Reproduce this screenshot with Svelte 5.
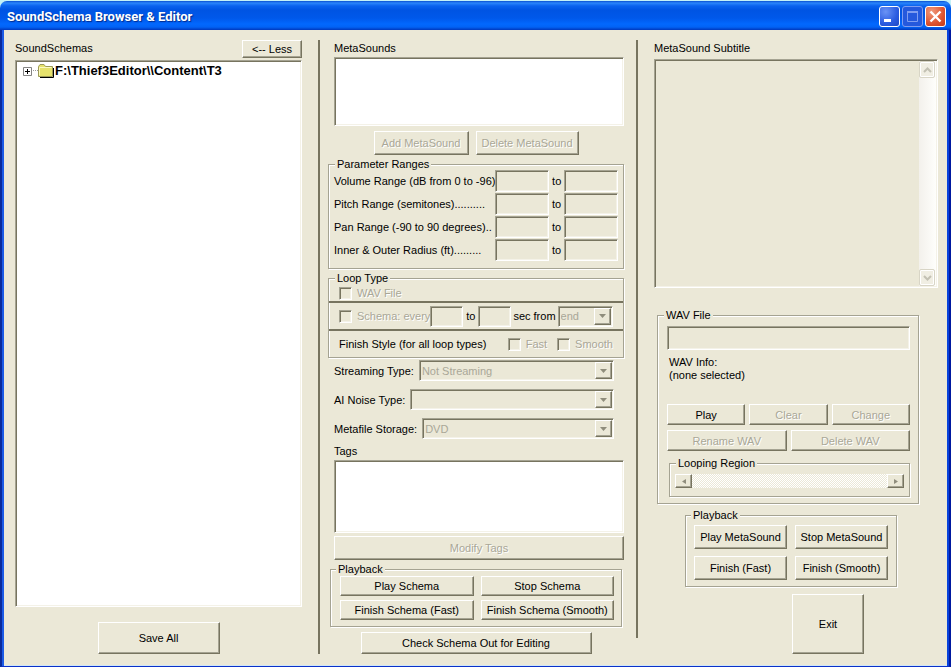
<script>
  const ranges = [
    { id: 'vol', label: 'Volume Range (dB from 0 to -96)' },
    { id: 'pitch', label: 'Pitch Range (semitones)..........' },
    { id: 'pan', label: 'Pan Range (-90 to 90 degrees)..' },
    { id: 'radius', label: 'Inner & Outer Radius (ft).........' }
  ];
  const choices = [
    { id: 'streaming', label: 'Streaming Type:', value: 'Not Streaming' },
    { id: 'noise', label: 'AI Noise Type:', value: '' },
    { id: 'storage', label: 'Metafile Storage:', value: 'DVD' }
  ];
</script>

{#snippet drop(id, value, label)}
  <span class="drop">
    <select {id} disabled aria-label={label}><option>{value}</option></select>
    <span class="arrow"><svg width="7" height="4" viewBox="0 0 7 4"><path d="M0 0h7L3.5 4z" fill="#8f8d7c" /></svg></span>
  </span>
{/snippet}

<main class="window">
  <header>
    <h1>SoundSchema Browser &amp; Editor</h1>
    <div class="caption">
      <button aria-label="Minimize"><svg viewBox="0 0 19 19"><path d="M4 12h7v3H4z" fill="#fff" /></svg></button>
      <button class="max" aria-label="Maximize" disabled><svg viewBox="0 0 19 19"><path d="M4.500 5.500h10v9h-10z" fill="none" stroke="#7f9df0" /><path d="M4 4h11v2H4z" fill="#7f9df0" /></svg></button>
      <button class="close" aria-label="Close"><svg viewBox="0 0 19 19"><path d="M4.500 4.500l10 10M14.500 4.500l-10 10" stroke="#fff" stroke-width="2.400" /></svg></button>
    </div>
  </header>

  <div class="body">
    <section class="left">
      <div class="head"><h2>SoundSchemas</h2><button class="less">&lt;-- Less</button></div>
      <ul class="tree">
        <li>
          <button class="expand" aria-label="Expand"><svg width="9" height="9" viewBox="0 0 9 9"><path d="M.5.5h8v8h-8z" fill="#fff" stroke="#848484" /><path d="M2 4.500h5M4.500 2v5" stroke="#000" /></svg></button>
          <svg class="dots" width="6" height="2" viewBox="0 0 6 2"><path d="M1 0h1v1H1zM3 0h1v1H3zM5 0h1v1H5z" fill="#999" /></svg>
          <svg width="16" height="14" viewBox="0 0 16 14"><path d="M2 13.500h13.500V4" fill="none" stroke="#000" /><path d="M.5 12.500v-10l1.500-2h4l1.500 2h7v10z" fill="#e6e26c" stroke="#9c9a58" /><path d="M1.500 11.500V3.500h12" fill="none" stroke="#fbfac0" /></svg>
          <b>F:\Thief3Editor\\Content\T3</b>
        </li>
      </ul>
      <button class="save">Save All</button>
    </section>

    <div class="rule"></div>

    <section class="mid">
      <h2 class="in">MetaSounds</h2>
      <div class="list deep" role="listbox" aria-label="MetaSounds" tabindex="0"></div>
      <div class="pair">
        <button class="add" disabled>Add MetaSound</button>
        <button class="del" disabled>Delete MetaSound</button>
      </div>

      <fieldset class="params">
        <legend>Parameter Ranges</legend>
        {#each ranges as r}
          <div class="range">
            <label for={r.id}>{r.label}</label>
            <input id={r.id} disabled />
            <label class="to" for="{r.id}-to">to</label>
            <input id="{r.id}-to" disabled />
          </div>
        {/each}
      </fieldset>

      <fieldset class="loop">
        <legend>Loop Type</legend>
        <div class="wavrow">
          <label class="tick"><input type="checkbox" disabled />WAV File</label>
        </div>
        <div class="schemarow">
          <label class="tick"><input type="checkbox" disabled />Schema: every</label>
          <input aria-label="Minimum seconds" disabled />
          <span class="to">to</span>
          <input aria-label="Maximum seconds" disabled />
          <label class="from" for="from">sec from</label>
          {@render drop('from', 'end', 'Seconds from')}
        </div>
        <div class="finishrow">
          <span>Finish Style (for all loop types)</span>
          <label class="tick"><input type="checkbox" disabled />Fast</label>
          <label class="tick"><input type="checkbox" disabled />Smooth</label>
        </div>
      </fieldset>

      <div class="choices">
        {#each choices as c}
          <div class="choice">
            <label for={c.id}>{c.label}</label>
            {@render drop(c.id, c.value, c.label)}
          </div>
        {/each}
      </div>

      <h2 class="in tags">Tags</h2>
      <div class="list taglist" role="listbox" aria-label="Tags" tabindex="0"></div>
      <button class="modify" disabled>Modify Tags</button>

      <fieldset class="play">
        <legend>Playback</legend>
        <div class="grid">
          <button>Play Schema</button>
          <button>Stop Schema</button>
          <button>Finish Schema (Fast)</button>
          <button>Finish Schema (Smooth)</button>
        </div>
      </fieldset>
      <button class="check">Check Schema Out for Editing</button>
    </section>

    <div class="rule short"></div>

    <section class="right">
      <h2><label for="subtitle">MetaSound Subtitle</label></h2>
      <div class="subtitle">
        <textarea id="subtitle" disabled></textarea>
        <div class="vbar">
          <button disabled aria-label="Scroll up"><svg width="9" height="6" viewBox="0 0 9 6"><path d="M1 5l3.500-3.500L8 5" fill="none" stroke="#c3c1b3" stroke-width="2" /></svg></button>
          <button disabled aria-label="Scroll down"><svg width="9" height="6" viewBox="0 0 9 6"><path d="M1 1l3.500 3.500L8 1" fill="none" stroke="#c3c1b3" stroke-width="2" /></svg></button>
        </div>
      </div>

      <fieldset class="wav">
        <legend>WAV File</legend>
        <input aria-label="WAV File" disabled />
        <p>WAV Info:<br />(none selected)</p>
        <div class="btns three">
          <button>Play</button>
          <button disabled>Clear</button>
          <button disabled>Change</button>
        </div>
        <div class="btns">
          <button disabled>Rename WAV</button>
          <button disabled>Delete WAV</button>
        </div>
        <fieldset class="region">
          <legend>Looping Region</legend>
          <div class="hbar">
            <button disabled aria-label="Scroll left"><svg width="4" height="5" viewBox="0 0 4 5"><path d="M4 0v5L0 2.500z" fill="#8f8d7c" /></svg></button>
            <button disabled aria-label="Scroll right"><svg width="4" height="5" viewBox="0 0 4 5"><path d="M0 0v5l4-2.500z" fill="#8f8d7c" /></svg></button>
          </div>
        </fieldset>
      </fieldset>

      <fieldset class="meta">
        <legend>Playback</legend>
        <div class="grid">
          <button>Play MetaSound</button>
          <button>Stop MetaSound</button>
          <button>Finish (Fast)</button>
          <button>Finish (Smooth)</button>
        </div>
      </fieldset>
      <button class="exit">Exit</button>
    </section>
  </div>
</main>

<style>
  :global(body) { margin: 0; background: #c4f1f7; }
  * { box-sizing: border-box; }
  .window {
    --face: #ebe8d7;
    --dark: #77745f;
    --line: #a5a392;
    min-height: 100vh;
    display: flex;
    flex-direction: column;
    padding-top: 1px;
    font: 11px/14px "Liberation Sans", Arial, sans-serif;
    color: #000;
  }
  h1, h2, p, ul { margin: 0; padding: 0; font-size: 11px; font-weight: normal; }
  header {
    height: 29px;
    display: flex;
    align-items: center;
    justify-content: space-between;
    padding: 2px 5px 0 7px;
    border-radius: 7px 7px 0 0;
    background: linear-gradient(#0a4fd0 0, #2a86fb 2px, #0a62ee 5px, #0054e3 9px, #0058ea 17px, #0268fe 23px, #0263f5 26px, #0038bd 29px);
  }
  h1 {
    font: bold 13px/18px Roboto, sans-serif;
    color: #fff;
    text-shadow: 1px 1px 1px #002a8c;
  }
  .caption { display: flex; gap: 2px; }
  .caption button {
    width: 21px;
    height: 21px;
    border: 1px solid #fff;
    border-radius: 3px;
    background: radial-gradient(circle at 30% 25%, #6a93f5, #2a5be0 60%, #1f49c4);
    box-shadow: none;
  }
  .caption .max { border-color: #7f9df0; background: #2559dd; }
  .caption .close { background: radial-gradient(circle at 30% 25%, #f09a7c, #dd5430 60%, #c43a14); }
  .caption svg { width: 19px; height: 19px; }

  .body {
    flex: 1;
    display: grid;
    grid-template-columns: 303fr 2px 316fr 2px 300fr;
    padding: 10px 11px 12px 13px;
    border: solid;
    border-width: 0 2px 2px;
    border-color: #0019a0 #0019a0 #0a30c8 #0a2a9c;
    box-shadow: inset 2px 0 0 #1c5be6, inset -2px 0 0 #0842dc, inset 0 -1px 0 #cfe6f8;
    background: var(--face);
  }
  .rule { background: var(--dark); }
  .rule.short { margin-bottom: 16px; }
  section { display: flex; flex-direction: column; min-width: 0; }
  .left { margin-right: 16px; }
  .mid { margin: 0 12px 0 8px; }
  .right { margin-left: 16px; }

  button, .arrow {
    display: flex;
    align-items: center;
    justify-content: center;
    padding: 0;
    font: inherit;
    color: #000;
    white-space: nowrap;
    background: var(--face);
    border: 1px solid;
    border-color: #fff var(--dark) var(--dark) #fff;
    border-radius: 0;
    box-shadow: inset -1px -1px 0 var(--line);
  }
  button:disabled, select:disabled, .tick:has(:disabled) { color: #a9a797; text-shadow: 1px 1px 0 #fff; opacity: 1; }
  select:disabled { text-shadow: none; }

  input, textarea, .subtitle, .drop, .list, .tree {
    min-width: 0;
    margin: 0;
    padding: 0 3px;
    font: inherit;
    background: var(--face);
    border: 1px solid;
    border-color: var(--line) #fff #fff var(--line);
    border-radius: 0;
    outline: 0;
    box-shadow: inset 1px 1px 0 var(--dark), inset -1px -1px 0 #f4f2e8;
  }
  .list, .tree { background: #fff; }

  .head { display: flex; justify-content: space-between; height: 18px; margin-bottom: 2px; }
  .head h2 { margin-top: 1px; }
  .less { width: 60px; height: 18px; }
  .tree { flex: 1; list-style: none; padding: 2px 7px; }
  .tree li { display: flex; align-items: center; height: 16px; }
  .expand { width: 9px; height: 9px; border: 0; box-shadow: none; }
  .tree b { margin-left: 1px; font-size: 13px; }
  .save { align-self: center; width: 122px; height: 32px; margin-top: 15px; }

  .in { margin: 1px 0 2px 6px; }
  .deep { height: 69px; margin-left: 6px; }
  .pair { display: flex; justify-content: center; gap: 7px; margin-top: 5px; }
  .pair button { height: 24px; }
  .add { width: 95px; }
  .del { width: 103px; }

  fieldset {
    min-width: 0;
    margin: 0;
    padding: 0 5px;
    border: 1px solid var(--line);
    box-shadow: 1px 1px 0 #fff, inset 1px 1px 0 #fff;
  }
  legend { margin-left: 1px; padding: 0 2px; background: var(--face); }
  .params { margin-top: 2px; padding-bottom: 6px; }
  .range { display: flex; align-items: center; height: 22px; margin-bottom: 1px; }
  .range:first-of-type { margin-top: -1px; }
  .range label:first-child { flex: 1; white-space: nowrap; }
  .range input { width: 54px; height: 22px; }
  .to { width: 15px; text-align: center; }

  .loop { margin-top: 2px; padding: 0; }
  .loop legend { margin-left: 6px; }
  .loop > div { display: flex; align-items: center; padding: 0 10px; }
  .wavrow { height: 16px; }
  .loop .schemarow { height: 30px; border: solid var(--dark); border-width: 2px 0; }
  .finishrow { height: 26px; gap: 10px; }
  .finishrow span { flex: 1; }
  .tick { display: flex; align-items: center; gap: 5px; white-space: nowrap; }
  .tick input { appearance: none; width: 13px; height: 13px; padding: 0; }
  .schemarow > input { width: 33px; height: 21px; }
  .from { margin: 0 2px; white-space: nowrap; }
  .schemarow .drop { flex: 1; }

  .drop { display: grid; height: 21px; padding: 1px; }
  .drop select, .drop .arrow { grid-area: 1 / 1; }
  .drop select { appearance: none; width: 100%; padding: 0 18px 0 1px; font: inherit; background: none; border: 0; border-radius: 0; }
  .arrow { justify-self: end; width: 17px; pointer-events: none; }
  .choices { display: flex; flex-direction: column; gap: 8px; margin: 2px 10px 0 6px; }
  .choice { display: flex; align-items: center; gap: 5px; }
  .choice .drop { flex: 1; }
  .tags { margin-top: 5px; }
  .taglist { height: 73px; margin-left: 6px; }
  .modify { height: 24px; margin: 3px 0 0 6px; }
  .play { margin: 2px 2px 0; padding: 0 7px 6px 9px; }
  .grid { display: grid; grid-template-columns: 1fr 1fr; }
  .play .grid { gap: 4px 7px; }
  .play legend { margin-left: -4px; }
  .play button { height: 20px; }
  .check { align-self: center; width: 231px; height: 22px; margin-top: 5px; }

  .right h2 { margin: 1px 0 4px; }
  .subtitle { display: flex; height: 229px; padding: 1px; }
  textarea { flex: 1; border: 0; resize: none; box-shadow: none; }
  .vbar { width: 17px; display: flex; flex-direction: column; justify-content: space-between; background: linear-gradient(90deg, #f3f1ec, #fefefb); }
  .vbar button { width: 16px; height: 17px; border: 1px solid #d8d5c6; border-radius: 2px; background: #f0eee3; box-shadow: inset 0 0 0 1px #fff; }
  .wav { margin: 20px 19px 0 3px; padding: 0 8px 6px 9px; display: flex; flex-direction: column; }
  .wav legend, .meta legend { margin-left: -3px; }
  .wav > input { width: 100%; height: 24px; margin-top: 4px; }
  .wav p { margin: 6px 0 0 2px; line-height: 13px; }
  .btns { display: grid; grid-template-columns: 1fr 1fr; gap: 4px; margin-top: 5px; }
  .three { grid-template-columns: 1fr 1fr 1fr; margin-top: 22px; }
  .btns button { height: 21px; }
  .region { margin: 5px 0 0 2px; padding: 4px 5px 8px; }
  .wav .region legend { margin-left: 1px; }
  .hbar {
    display: flex;
    justify-content: space-between;
    height: 14px;
    background: repeating-conic-gradient(#fff 0 25%, var(--face) 0 50%) 0 0 / 2px 2px;
  }
  .hbar button { width: 17px; }
  .meta { margin: 4px 41px 0 31px; padding: 3px 8px 6px; }
  .meta .grid { gap: 7px 8px; }
  .meta button { height: 24px; }
  .exit { align-self: flex-end; width: 72px; height: 60px; margin: 7px 74px 0 0; }
</style>
